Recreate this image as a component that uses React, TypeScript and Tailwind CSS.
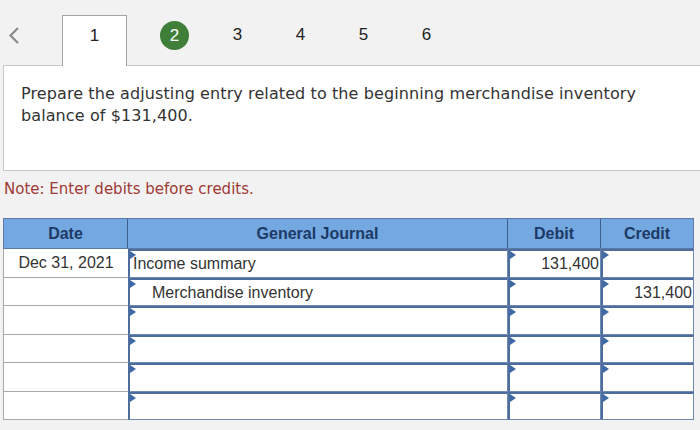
import React from "react";

const Tri = () => (
  <svg className="absolute left-0 top-0" width="7" height="9" viewBox="0 0 7 9">
    <polygon points="0,0 6,4 0,8" fill="#3d69a6" />
  </svg>
);

type RowData = { date: string; account: string; indent: boolean; debit: string; credit: string; h: string };

const rows: RowData[] = [
  { date: "Dec 31, 2021", account: "Income summary", indent: false, debit: "131,400", credit: "", h: "h-[29px]" },
  { date: "", account: "Merchandise inventory", indent: true, debit: "", credit: "131,400", h: "h-[28px]" },
  { date: "", account: "", indent: false, debit: "", credit: "", h: "h-[29px]" },
  { date: "", account: "", indent: false, debit: "", credit: "", h: "h-[28px]" },
  { date: "", account: "", indent: false, debit: "", credit: "", h: "h-[29px]" },
  { date: "", account: "", indent: false, debit: "", credit: "", h: "h-[28px]" },
];

function InputBox({ w, children, align }: { w: string; children?: React.ReactNode; align: "left" | "right" }) {
  return (
    <div
      className={`${w} relative bg-white border-t-2 border-l-2 border-r border-b border-t-[#4d6d9e] border-l-[#4d6d9e] border-r-[#6f89b3] border-b-[#6f89b3] flex items-center ${
        align === "right" ? "justify-end pr-[1px]" : "justify-start"
      }`}
    >
      <Tri />
      {children}
    </div>
  );
}

export default function App() {
  return (
    <div className="w-[700px] h-[430px] overflow-hidden bg-[#f2f2f2] font-['Liberation_Sans',Arial,sans-serif]">
      {/* nav */}
      <div className="flex h-[65px] relative z-10">
        <div className="w-[62px] pt-[27px] pl-[8px]">
          <svg width="12" height="17" viewBox="0 0 12 17">
            <polyline points="10,1 2.5,8.5 10,16" fill="none" stroke="#8a8a8a" strokeWidth="2.2" />
          </svg>
        </div>
        <div className="mt-[15px] h-[51px] w-[65px] bg-white border border-b-0 border-[#a3a3a3] flex justify-center pt-[9px] text-[17px] leading-[22px] text-[#222]">
          1
        </div>
        <div className="ml-[16px] w-[63px] flex justify-center pt-[21px]">
          <div className="w-[29px] h-[29px] rounded-full bg-[#3f7f3a] text-white flex items-center justify-center text-[17px]">2</div>
        </div>
        {["3", "4", "5", "6"].map((n) => (
          <div key={n} className="w-[63px] flex justify-center pt-[24px] text-[17px] leading-[22px] text-[#222]">
            {n}
          </div>
        ))}
      </div>

      {/* question panel */}
      <div className="ml-[3px] h-[106px] bg-white border border-r-0 border-[#c8c8c8] pl-[17px] pt-[17px] font-['DejaVu_Sans',Verdana,sans-serif] text-[16px] leading-[22px] tracking-[0.1px] text-[#333]">
        Prepare the adjusting entry related to the beginning merchandise inventory
        <br />
        balance of $131,400.
      </div>

      <div className="ml-[4px] mt-[8px] font-['DejaVu_Sans',Verdana,sans-serif] text-[15px] leading-[20px] text-[#a03a36]">
        Note: Enter debits before credits.
      </div>

      {/* table */}
      <div className="ml-[3px] mt-[19px] w-[691px] text-[16px] text-[#333]">
        <div className="flex h-[31px] bg-[#74a8e0] border border-[#5b7aa5] text-[#1d3a66] font-bold">
          <div className="w-[124px] flex items-center justify-center border-r border-[#3f5f8e]">Date</div>
          <div className="w-[380px] flex items-center justify-center border-r border-[#3f5f8e]">General Journal</div>
          <div className="w-[93px] flex items-center justify-center border-r border-[#3f5f8e]">Debit</div>
          <div className="flex-1 flex items-center justify-center">Credit</div>
        </div>
        {rows.map((r, i) => (
          <div key={i} className={`flex ${r.h}`}>
            <div className="w-[125px] bg-white border-l border-b border-[#a8a8a8] flex items-center justify-center">
              {r.date}
            </div>
            <InputBox w="w-[380px]" align="left">
              <span className={r.indent ? "pl-[22px]" : "pl-[3px]"}>{r.account}</span>
            </InputBox>
            <InputBox w="w-[93px]" align="right">
              {r.debit}
            </InputBox>
            <InputBox w="w-[93px]" align="right">
              {r.credit}
            </InputBox>
          </div>
        ))}
      </div>
    </div>
  );
}
